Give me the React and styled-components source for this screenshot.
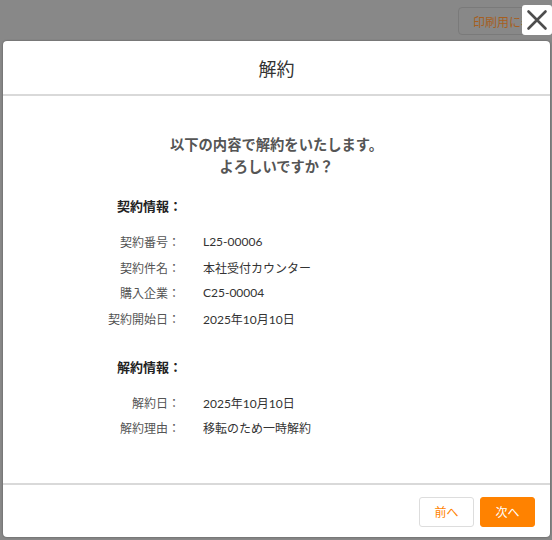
import React from 'react'
import styled, { createGlobalStyle } from 'styled-components'

const GlobalStyle = createGlobalStyle`
  html, body {
    margin: 0;
    padding: 0;
    background: #888888;
  }
  body {
    font-family: Lato, "Noto Sans CJK JP", sans-serif;
  }
`

const contractRows = [
  { label: '契約番号：', value: 'L25-00006' },
  { label: '契約件名：', value: '本社受付カウンター' },
  { label: '購入企業：', value: 'C25-00004' },
  { label: '契約開始日：', value: '2025年10月10日' },
]

const cancelRows = [
  { label: '解約日：', value: '2025年10月10日' },
  { label: '解約理由：', value: '移転のため一時解約' },
]

export default function App() {
  return (
    <>
      <GlobalStyle />
      <Overlay>
        <TopBar>
          <PrintButton>印刷用に表示</PrintButton>
        </TopBar>
        <CloseButton aria-label="閉じる">
          <svg width="30" height="30" viewBox="0 0 30 30">
            <path d="M6.5 6.5 L23.5 23.5 M23.5 6.5 L6.5 23.5" stroke="#4d4d4d" strokeWidth="2.6" strokeLinecap="round" fill="none" />
          </svg>
        </CloseButton>
        <Dialog>
          <Header>
            <Title>解約</Title>
          </Header>
          <Body>
            <Message>
              以下の内容で解約をいたします。
              <br />
              よろしいですか？
            </Message>
            <Section>
              <SectionTitle>契約情報：</SectionTitle>
              <InfoGrid>
                {contractRows.map((r) => (
                  <React.Fragment key={r.label}>
                    <Label>{r.label}</Label>
                    <Value>{r.value}</Value>
                  </React.Fragment>
                ))}
              </InfoGrid>
            </Section>
            <Section spaced>
              <SectionTitle tight>解約情報：</SectionTitle>
              <InfoGrid>
                {cancelRows.map((r) => (
                  <React.Fragment key={r.label}>
                    <Label>{r.label}</Label>
                    <Value>{r.value}</Value>
                  </React.Fragment>
                ))}
              </InfoGrid>
            </Section>
          </Body>
          <Footer>
            <Button>前へ</Button>
            <Button primary>次へ</Button>
          </Footer>
        </Dialog>
      </Overlay>
    </>
  )
}

const Overlay = styled.div`
  position: relative;
  width: 552px;
  height: 540px;
  overflow: hidden;
  background: #888888;
  box-sizing: border-box;
  padding: 0 2px 3px 3px;
  display: flex;
  flex-direction: column;
`

const TopBar = styled.div`
  height: 41px;
  box-sizing: border-box;
  padding: 7px 0 0 455px;
  display: flex;
`

const PrintButton = styled.div`
  height: 28px;
  box-sizing: border-box;
  padding: 0 14px;
  border: 1px solid #7a7a7a;
  border-radius: 4px;
  display: flex;
  align-items: center;
  white-space: nowrap;
  font-size: 12px;
  color: #a65f1f;
`

const CloseButton = styled.button`
  position: absolute;
  top: 5px;
  left: 522px;
  width: 30px;
  height: 30px;
  padding: 0;
  border: none;
  border-radius: 3px;
  background: #ffffff;
  display: flex;
  align-items: center;
  justify-content: center;
`

const Dialog = styled.div`
  flex: 1;
  background: #ffffff;
  border-radius: 4px;
  box-shadow: 0 0 2px rgba(0, 0, 0, 0.45);
  display: flex;
  flex-direction: column;
`

const Header = styled.div`
  height: 53px;
  border-bottom: 2px solid #d9d9d9;
  display: flex;
  align-items: center;
  justify-content: center;
`

const Title = styled.h2`
  margin: 0;
  font-size: 18px;
  font-weight: 400;
  color: #333333;
`

const Body = styled.div`
  flex: 1;
  padding: 38px 0 0 0;
`

const Message = styled.p`
  margin: 0 0 18px;
  text-align: center;
  font-size: 14.3px;
  font-weight: 700;
  line-height: 22px;
  color: #555555;
`

const Section = styled.div`
  padding-left: 100px;
  margin-top: ${(p) => (p.spaced ? '26px' : '0')};
`

const SectionTitle = styled.h3`
  margin: 0 0 ${(p) => (p.tight ? '12px' : '13px')} 14px;
  font-size: 13px;
  font-weight: 700;
  line-height: 20px;
  color: #222222;
`

const InfoGrid = styled.div`
  display: grid;
  grid-template-columns: 77px 1fr;
  column-gap: 23px;
  grid-auto-rows: 25.6px;
  align-items: center;
  font-size: 12px;
`

const Label = styled.div`
  text-align: right;
  color: #555555;
  white-space: nowrap;
`

const Value = styled.div`
  color: #333333;
`

const Footer = styled.div`
  height: 52px;
  border-top: 2px solid #d9d9d9;
  box-sizing: content-box;
  padding: 0 15px;
  display: flex;
  align-items: center;
  justify-content: flex-end;
  gap: 6px;
`

const Button = styled.button`
  width: 55px;
  height: 30px;
  border-radius: 3px;
  font-family: inherit;
  font-size: 12px;
  border: 1px solid ${(p) => (p.primary ? '#ff8200' : '#dddddd')};
  background: ${(p) => (p.primary ? '#ff8200' : '#ffffff')};
  color: ${(p) => (p.primary ? '#ffffff' : '#ff8200')};
  margin-top: 1px;
`
